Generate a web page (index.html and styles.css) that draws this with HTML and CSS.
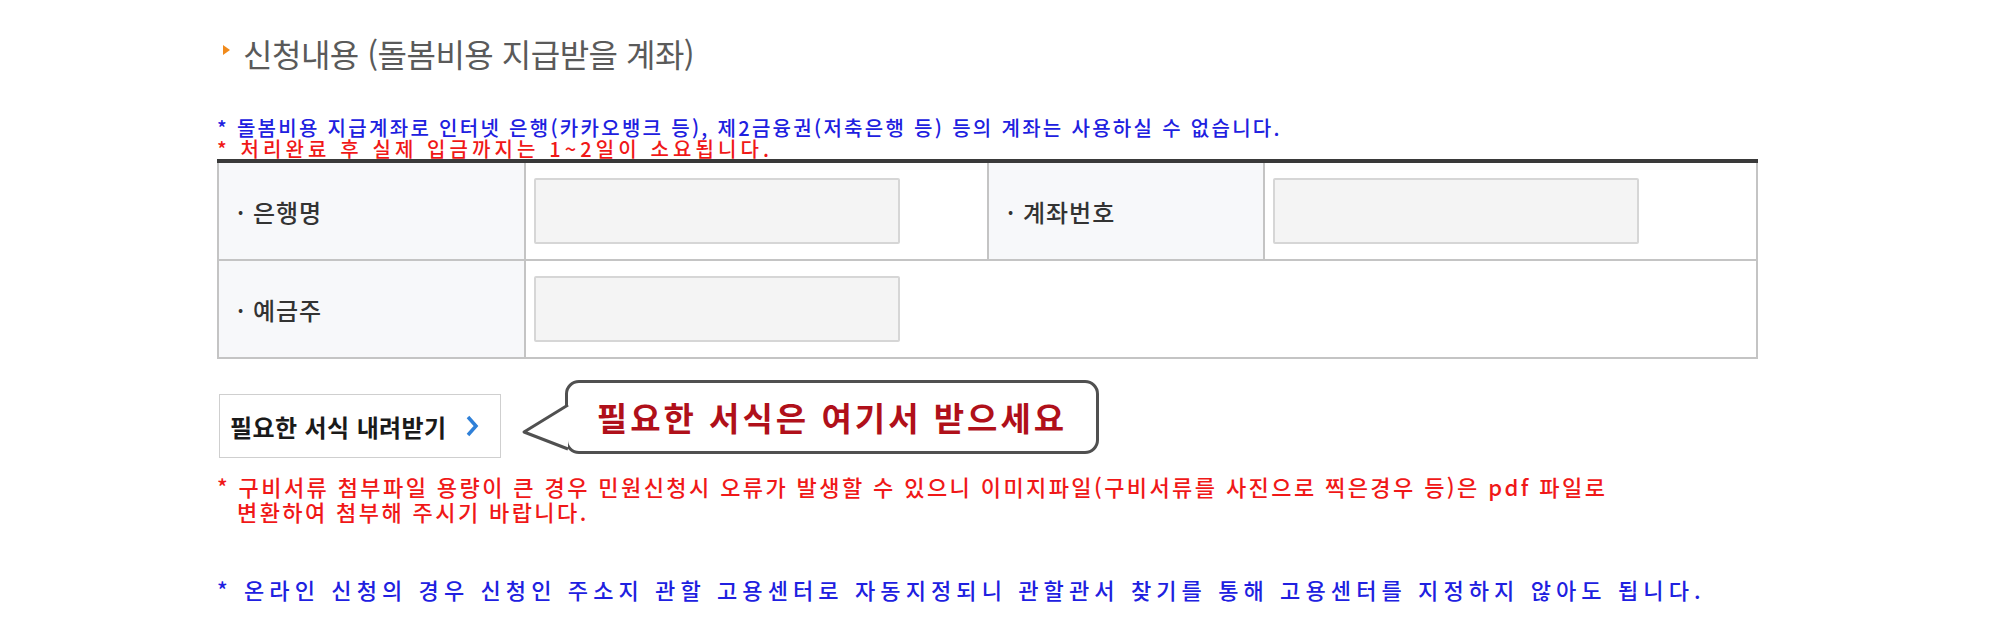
FILE: index.html
```html
<!DOCTYPE html>
<html lang="ko">
<head>
    <meta charset="UTF-8">
    <title>신청내용 (돌봄비용 지급받을 계좌)</title>
    <link rel="stylesheet" href="styles.css">
</head>
<body>

    <div class="wrap">
        <!-- Section title -->
        <h3 class="section-title"><span class="arrow"></span>신청내용 (돌봄비용 지급받을 계좌)</h3>

        <p class="note blue sp-1">* 돌봄비용 지급계좌로 인터넷 은행(카카오뱅크 등), 제2금융권(저축은행 등) 등의 계좌는 사용하실 수 없습니다.</p>
        <p class="note red sp-2">* 처리완료 후 실제 입금까지는 1~2일이 소요됩니다.</p>

        <!-- Account form -->
        <table class="form-table">
            <colgroup>
                <col class="c1">
                <col class="c2">
                <col class="c3">
                <col class="c4">
            </colgroup>
            <tr>
                <th>· 은행명</th>
                <td><input type="text" class="field"></td>
                <th>· 계좌번호</th>
                <td><input type="text" class="field"></td>
            </tr>
            <tr>
                <th>· 예금주</th>
                <td colspan="3"><input type="text" class="field"></td>
            </tr>
        </table>

        <div class="download-row">
            <a href="#" class="btn-download">필요한 서식 내려받기
                <svg class="chev" width="14" height="22" viewBox="0 0 14 22"><path d="M3 2 L11 11 L3 20" fill="none" stroke="#2f80d8" stroke-width="3.5"/></svg>
            </a>
            <div class="bubble">
                <svg class="tail" width="48" height="48" viewBox="0 0 48 48"><polygon points="47,2 3,29 47,46" fill="#fff"/><polyline points="47,2 3,29 47,46" fill="none" stroke="#505050" stroke-width="3" stroke-linejoin="round"/></svg>
                필요한 서식은 여기서 받으세요
            </div>
        </div>

        <p class="note red wide sp-3">* 구비서류 첨부파일 용량이 큰 경우 민원신청시 오류가 발생할 수 있으니 이미지파일(구비서류를 사진으로 찍은경우 등)은 pdf 파일로<br><span class="indent">변환하여 첨부해 주시기 바랍니다.</span></p>

        <p class="note blue wide sp-4 last">* 온라인 신청의 경우 신청인 주소지 관할 고용센터로 자동지정되니 관할관서 찾기를 통해 고용센터를 지정하지 않아도 됩니다.</p>
    </div>

</body>
</html>
```

FILE: styles.css
```css
body {
    margin: 0;
    padding: 0;
    background: #fff;
    font-family: "Noto Sans CJK KR", "Noto Sans", sans-serif;
}

.wrap {
    padding: 32px 0 0 217px;
    width: 1541px;
}

.section-title {
    margin: 0 0 43px 0;
    font-size: 32px;
    font-weight: 400;
    line-height: 42px;
    color: #5a5a5a;
    letter-spacing: -0.5px;
}

.arrow {
    display: inline-block;
    width: 0;
    height: 0;
    border-top: 5px solid transparent;
    border-bottom: 5px solid transparent;
    border-left: 7px solid #f08a1c;
    margin: 0 13px 0 6px;
    vertical-align: 12px;
}

.note {
    margin: 0;
    font-size: 20px;
    line-height: 21px;
    font-weight: 500;
}

.note.wide {
    font-size: 22px;
    line-height: 25px;
}

/* letter spacing per line, to match the original widths */
.sp-1 { letter-spacing: 2.3px; }
.sp-2 { letter-spacing: 4.1px; }
.sp-3 { letter-spacing: 2.4px; }
.sp-4 { letter-spacing: 5.1px; }

.blue {
    color: #2020e0;
}

.red {
    color: #f01818;
}

.indent {
    padding-left: 20px;
}

.form-table {
    width: 100%;
    margin-top: 0;
    border-collapse: collapse;
    border-top: 4px solid #3a3a3a;
}

.c1 { width: 307px; }
.c2 { width: 463px; }
.c3 { width: 276px; }

.form-table th,
.form-table td {
    border: 2px solid #c4c4c4;
    height: 96px;
    padding: 0 8px;
}

.form-table th {
    background: #f7f8fa;
    text-align: left;
    font-size: 24px;
    font-weight: 500;
    letter-spacing: 1px;
    color: #333;
    padding-left: 18px;
}

.field {
    display: block;
    width: 366px;
    height: 66px;
    box-sizing: border-box;
    background: #f4f4f4;
    border: 2px solid #d6d6d6;
    border-radius: 2px;
}

.download-row {
    display: flex;
    align-items: flex-start;
    gap: 64px;
    margin: 21px 0 16px 2px;
}

.btn-download {
    display: flex;
    align-items: center;
    gap: 18px;
    width: 282px;
    height: 64px;
    margin-top: 14px;
    box-sizing: border-box;
    padding-left: 10px;
    border: 1px solid #cfcfcf;
    color: #1a1a1a;
    font-size: 24px;
    font-weight: 700;
    letter-spacing: 0.4px;
    text-decoration: none;
}

.bubble {
    position: relative;
    width: 534px;
    height: 74px;
    box-sizing: border-box;
    border: 3px solid #505050;
    border-radius: 14px;
    display: flex;
    align-items: center;
    justify-content: center;
    font-size: 33px;
    font-weight: 700;
    letter-spacing: 3px;
    color: #b0101a;
}

.tail {
    position: absolute;
    left: -47px;
    bottom: 0;
}

.last {
    margin-top: 53px;
}
```
